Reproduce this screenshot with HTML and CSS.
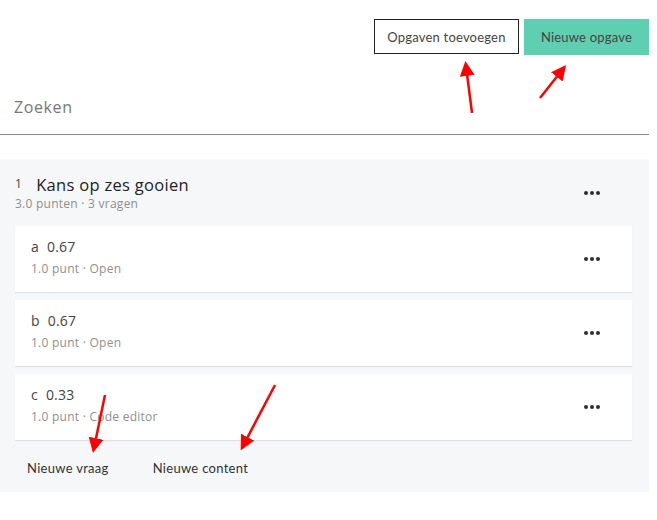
FILE: index.html
```html
<!DOCTYPE html>
<html lang="nl">
<head>
  <meta charset="UTF-8">
  <meta name="viewport" content="width=device-width, initial-scale=1.0">
  <title>Opgaven</title>
  <link rel="stylesheet" href="styles.css">
</head>
<body>
  <div id="page">
    <div class="toolbar">
      <button class="btn btn-outline">Opgaven toevoegen</button>
      <button class="btn btn-primary">Nieuwe opgave</button>
    </div>

    <div class="search">
      <input type="text" placeholder="Zoeken">
    </div>

    <div class="assignment">
      <div class="assignment-head">
        <div>
          <div class="assignment-title"><span class="num">1</span>Kans op zes gooien</div>
          <div class="meta">3.0 punten · 3 vragen</div>
        </div>
        <span class="more"><i></i><i></i><i></i></span>
      </div>

      <div class="question">
        <div>
          <div class="question-title"><span class="letter">a</span>0.67</div>
          <div class="meta">1.0 punt · Open</div>
        </div>
        <span class="more"><i></i><i></i><i></i></span>
      </div>

      <div class="question">
        <div>
          <div class="question-title"><span class="letter">b</span>0.67</div>
          <div class="meta">1.0 punt · Open</div>
        </div>
        <span class="more"><i></i><i></i><i></i></span>
      </div>

      <div class="question">
        <div>
          <div class="question-title"><span class="letter">c</span>0.33</div>
          <div class="meta">1.0 punt · Code editor</div>
        </div>
        <span class="more"><i></i><i></i><i></i></span>
      </div>

      <div class="assignment-foot">
        <a href="#">Nieuwe vraag</a>
        <a href="#">Nieuwe content</a>
      </div>
    </div>

    <!-- annotatie pijlen -->
    <svg class="arrows" width="657" height="520" viewBox="0 0 657 520">
      <defs>
        <marker id="head" markerWidth="6" markerHeight="6" refX="4" refY="3" orient="auto" markerUnits="strokeWidth">
          <path d="M0,0 L6,3 L0,6 Z" fill="#ff0000"/>
        </marker>
      </defs>
      <g stroke="#ff0000" stroke-width="2.5" fill="none" marker-end="url(#head)">
        <line x1="472" y1="113" x2="466" y2="66"/>
        <line x1="540" y1="98" x2="563" y2="69"/>
        <line x1="105" y1="395" x2="94" y2="448"/>
        <line x1="275" y1="385" x2="243" y2="446"/>
      </g>
    </svg>
  </div>
</body>
</html>
```

FILE: styles.css
```css
body {
  margin: 0;
  background-color: #fff;
  font-family: "Open Sans", Arial, sans-serif;
  color: #333;
}
#page {
  position: relative;
  width: 649px;
  height: 520px;
}
.toolbar {
  display: flex;
  justify-content: flex-end;
  gap: 5px;
  padding-top: 19px;
}
.btn {
  font-family: Lato, "Open Sans", sans-serif;
  font-size: 13px;
  height: 36px;
  padding: 0;
  white-space: nowrap;
  cursor: pointer;
  color: #444;
  letter-spacing: 0.2px;
}
.btn-outline {
  background-color: #fff;
  border: 1px solid #222;
  height: 35px;
  width: 145px;
}
.btn-primary {
  background-color: #5fcfb1;
  border: none;
  width: 125px;
}
.search {
  margin-top: 24px;
  border-bottom: 1px solid #8a8a8a;
}
.search input {
  display: block;
  width: 100%;
  box-sizing: border-box;
  height: 55px;
  border: none;
  outline: none;
  padding: 0 14px;
  font-family: "Open Sans", sans-serif;
  font-size: 16px;
  letter-spacing: 0.6px;
  color: #333;
  background: transparent;
}
.search input::placeholder {
  color: #777;
}
.assignment {
  margin-top: 24px;
  background-color: #f6f7f9;
  padding: 14px 17px 0 15px;
  height: 319px;
}
.assignment-head {
  display: flex;
  justify-content: space-between;
  align-items: center;
  padding-right: 32px;
  margin-bottom: 14px;
}
.assignment-title {
  font-size: 16.5px;
  font-weight: 500;
  color: #222;
  line-height: 21px;
  letter-spacing: 0.3px;
}
.num {
  font-size: 12px;
  font-weight: 400;
  color: #444;
  margin-right: 14px;
  vertical-align: 3px;
}
.meta {
  font-size: 12px;
  color: #8f8f8f;
  line-height: 17px;
  letter-spacing: 0.25px;
}
.question {
  display: flex;
  justify-content: space-between;
  align-items: center;
  background-color: #fff;
  height: 66px;
  box-sizing: border-box;
  padding: 0 32px 0 16px;
  margin-bottom: 8px;
  box-shadow: 0 1px 1px rgba(0, 0, 0, 0.09);
}
.question > div {
  margin-top: -6px;
}
.question-title {
  font-size: 14px;
  color: #444;
  line-height: 22px;
  margin-bottom: 2px;
  letter-spacing: 0.2px;
}
.letter {
  margin-right: 8px;
}
.more {
  display: flex;
  gap: 2px;
}
.more i {
  width: 4px;
  height: 4px;
  border-radius: 50%;
  background-color: #2b2d31;
}
.assignment-foot {
  display: flex;
  gap: 44px;
  padding: 12px 0 0 12px;
}
.assignment-foot a {
  font-family: Lato, "Open Sans", sans-serif;
  font-size: 13px;
  color: #333;
  text-decoration: none;
  letter-spacing: 0.3px;
}
.arrows {
  position: absolute;
  left: 0;
  top: 0;
  pointer-events: none;
}
```
